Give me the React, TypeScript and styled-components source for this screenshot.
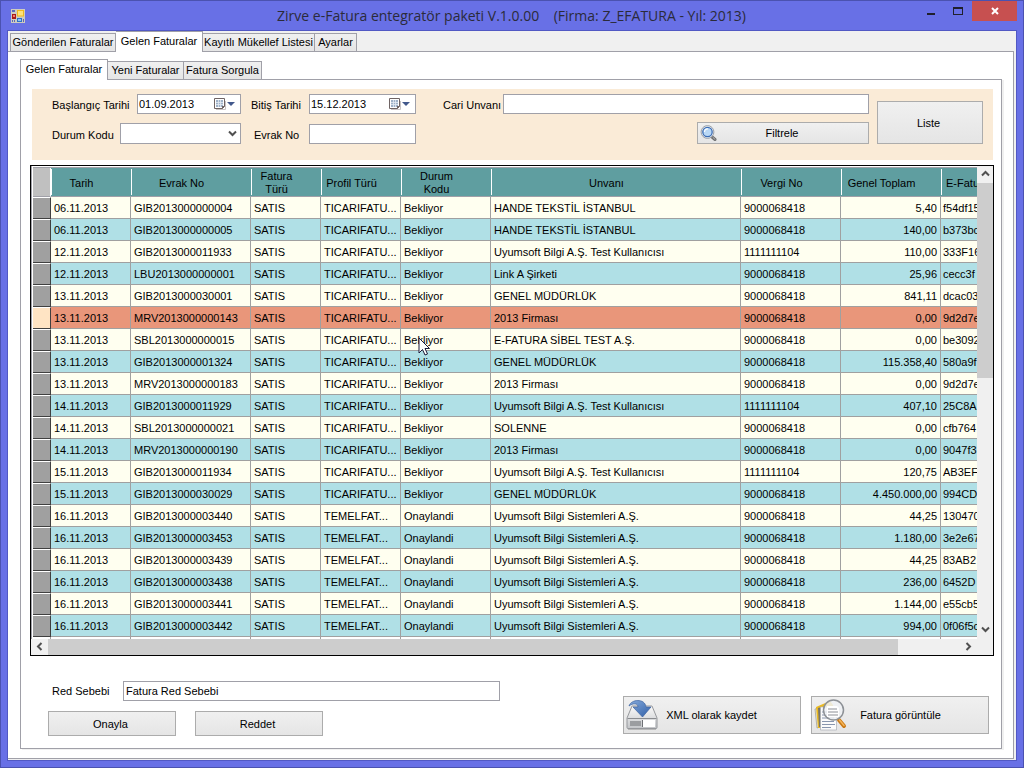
import React from 'react';
import styled, { createGlobalStyle, css } from 'styled-components';

const GlobalStyle = createGlobalStyle`
  *, *::before, *::after { box-sizing: border-box; }
  body { margin: 0; background: #6870e6; }
  body, button, input, select {
    font-family: "Liberation Sans", Arial, sans-serif;
    font-size: 11px;
    color: #000;
  }
`;

const line = '#a0a0a8';

/* ---------- window frame ---------- */

const Window = styled.div`
  min-height: 100vh;
  display: flex;
  flex-direction: column;
  padding: 0 6px 6px;
  border: 1px solid #4b52b0;
  background: #6870e6;
`;

const TitleBar = styled.header`
  position: relative;
  flex: none;
  height: 29px;
  display: flex;
  align-items: center;
  justify-content: space-between;
  padding-left: 4px;
`;

const Title = styled.h1`
  margin: 0;
  flex: 1;
  padding-left: 80px;
  text-align: center;
  font: 400 14px/28px "Open Sans", "Noto Sans", sans-serif;
  color: #2b2b3a;
  white-space: pre;
`;

const Caption = styled.div`
  align-self: flex-start;
  display: flex;
`;

const CaptionButton = styled.button<{ $close?: boolean }>`
  width: ${p => (p.$close ? 45 : 27)}px;
  height: 20px;
  padding: 0;
  border: 0;
  display: flex;
  align-items: center;
  justify-content: center;
  background: ${p => (p.$close ? '#c75050' : 'transparent')};
`;

const Client = styled.main`
  flex: 1;
  display: flex;
  flex-direction: column;
  border: 1px solid #5158c4;
  background: #f0f0f0;
`;

/* ---------- tabs ---------- */

const TabStrip = styled.div<{ $indent: number }>`
  flex: none;
  height: 20px;
  display: flex;
  align-items: flex-end;
  padding-left: ${p => p.$indent}px;
`;

const Tab = styled.button<{ $width: number; $active?: boolean }>`
  min-width: ${p => p.$width}px;
  height: 18px;
  padding: 0 1px;
  border: 1px solid ${line};
  border-bottom: 0;
  background: linear-gradient(#f0f0f0, #e5e5e5);
  white-space: nowrap;
  line-height: 17px;
  & + & { border-left: 0; }
  ${p => p.$active && css`
    position: relative;
    z-index: 1;
    height: 21px;
    margin-bottom: -1px;
    padding: 0 1px 2px;
    background: #fff;
  `}
`;

const OuterPanel = styled.section`
  flex: 1;
  display: flex;
  flex-direction: column;
  margin: 0 2px 1px 0;
  padding: 7px 11px 9px 12px;
  border: 1px solid ${line};
  border-left: 0;
  background: #fff;
`;

const InnerPanel = styled.section`
  flex: 1;
  display: flex;
  flex-direction: column;
  border: 1px solid ${line};
  box-shadow: 2px 1px 0 #f0f0f0;
  background: #fff;
`;

/* ---------- fields ---------- */

const FilterBar = styled.form`
  display: flex;
  gap: 8px;
  height: 71px;
  margin: 9px 8px 0 11px;
  padding: 4px 10px 0 20px;
  background: #faebd7;
`;

const FilterRows = styled.div`
  flex: 1;
  min-width: 0;
  display: flex;
  flex-direction: column;
  gap: 8px;
`;

const FieldRow = styled.div`
  display: flex;
  align-items: flex-end;
  min-height: 21px;
`;

const Label = styled.label<{ $width: number; $before?: number }>`
  flex: none;
  width: ${p => p.$width}px;
  margin-left: ${p => p.$before ?? 0}px;
  line-height: 18px;
  white-space: nowrap;
`;

const fieldBox = css<{ $width?: number }>`
  height: 20px;
  border: 1px solid ${line};
  border-radius: 0;
  background: #fff;
  ${p => (p.$width ? css`flex: none; width: ${p.$width}px;` : css`flex: 1; min-width: 0;`)}
`;

const TextBox = styled.input<{ $width?: number }>`
  ${fieldBox}
  padding: 0 2px;
  outline: 0;
`;

const DateBox = styled.div<{ $width?: number }>`
  ${fieldBox}
  display: flex;
  align-items: center;
  padding-right: 4px;
`;

const DateInput = styled.input`
  flex: 1;
  min-width: 0;
  padding: 0 1px;
  border: 0;
  outline: 0;
  background: transparent;
`;

const DropButton = styled.button`
  display: flex;
  padding: 0;
  border: 0;
  background: none;
`;

const SelectBox = styled.div<{ $width?: number }>`
  ${fieldBox}
  height: 21px;
  display: flex;
  align-items: center;
  padding-right: 3px;
`;

const Select = styled.select`
  appearance: none;
  flex: 1;
  min-width: 0;
  height: 19px;
  border: 0;
  outline: 0;
  background: transparent;
`;

const Button = styled.button<{ $width: number; $height: number; $top?: number }>`
  flex: none;
  display: flex;
  align-items: center;
  width: ${p => p.$width}px;
  height: ${p => p.$height}px;
  margin-top: ${p => p.$top ?? 0}px;
  padding: 0 3px 0 2px;
  border: 1px solid #acacac;
  background: linear-gradient(#f0f0f0, #e5e5e5);
`;

const ButtonText = styled.span<{ $shift?: number }>`
  flex: 1;
  text-align: center;
  padding-right: ${p => p.$shift ?? 0}px;
`;

const Spacer = styled.div`
  flex: 1;
`;

/* ---------- grid ---------- */

const GridFrame = styled.div`
  display: grid;
  grid-template-columns: minmax(0, 1fr) 16px;
  grid-template-rows: auto 16px;
  margin: 5px 7px 0 9px;
  border: 1px solid #000;
  background: #fff;
`;

const GridView = styled.div`
  overflow: hidden;
  padding: 1px 0 0 1px;
  border-left: 1px solid ${line};
`;

const Table = styled.table`
  width: 100%;
  table-layout: fixed;
  border-collapse: separate;
  border-spacing: 0;
  border-top: 1px solid ${line};
`;

const HeadCell = styled.th`
  height: 29px;
  padding: 2px 19px 0 0;
  border-bottom: 1px solid ${line};
  background: linear-gradient(#fff, #fff) 0 1px / 1px 26px no-repeat #5f9ea0;
  font-weight: 400;
  line-height: 13px;
  white-space: nowrap;
  overflow: hidden;
`;

const LastHeadCell = styled(HeadCell)`
  padding: 2px 0 0 5px;
  text-align: left;
`;

const Corner = styled.td`
  border-right: 1px solid #fff;
  border-bottom: 1px solid ${line};
  background: #c0c0c0;
`;

const Row = styled.tr<{ $tone: 'light' | 'blue' | 'selected' }>`
  background: ${p => ({ light: '#fffff0', blue: '#b0e0e6', selected: '#e9967a' })[p.$tone]};
`;

const RowHead = styled.td<{ $selected?: boolean }>`
  height: 22px;
  padding: 0;
  border-top: 1px solid #fff;
  border-right: 1px solid #404040;
  border-bottom: 1px solid #404040;
  background: ${p => (p.$selected ? '#ffe4c4' : '#a0a0a0')};
`;

const Cell = styled.td<{ $right?: boolean; $over?: boolean }>`
  height: 22px;
  padding: 0 3px;
  border-right: 1px solid #a0a0a0;
  border-bottom: 1px solid #a0a0a0;
  text-align: ${p => (p.$right ? 'right' : 'left')};
  white-space: nowrap;
  overflow: ${p => (p.$over ? 'visible' : 'hidden')};
`;

const LastCell = styled(Cell)`
  padding: 0 0 0 2px;
  border-right: 0;
`;

const EndCell = styled.td`
  height: 2px;
  padding: 0;
  border-right: 1px solid #a0a0a0;
  &:last-child { border-right: 0; }
`;

const PointerHost = styled.span`
  position: relative;
`;

const PointerArrow = styled.svg`
  position: absolute;
  left: 14px;
  top: 3px;
  z-index: 2;
`;

const ScrollBar = styled.div<{ $vertical?: boolean }>`
  display: flex;
  flex-direction: ${p => (p.$vertical ? 'column' : 'row')};
  grid-column: ${p => (p.$vertical ? 'auto' : '1 / -1')};
  padding-right: ${p => (p.$vertical ? 0 : 16)}px;
  background: #f0f0f0;
`;

const ScrollButton = styled.button`
  flex: none;
  width: 17px;
  height: 17px;
  padding: 0 1px 2px 0;
  border: 0;
  display: flex;
  align-items: center;
  justify-content: center;
  background: none;
`;

const Thumb = styled.div<{ $share: number }>`
  flex: ${p => p.$share} 1 0;
  background: #cdcdcd;
`;

const Track = styled.div<{ $share: number }>`
  flex: ${p => p.$share} 1 0;
`;

/* ---------- footer ---------- */

const Footer = styled.footer`
  display: flex;
  justify-content: space-between;
  align-items: center;
  padding: 25px 12px 12px 27px;
`;

const Reject = styled.div`
  display: flex;
  flex-direction: column;
  gap: 10px;
`;

const RejectRow = styled.div`
  display: flex;
  align-items: center;
  padding-left: 4px;
`;

const ButtonRow = styled.div<{ $gap: number }>`
  display: flex;
  gap: ${p => p.$gap}px;
`;

/* ---------- drawings ---------- */

const AppIcon = () => (
  <svg width="14" height="14" viewBox="0 0 14 14" aria-hidden="true">
    <path d="M0 0h14v14H0z" fill="#cfccbe" />
    <path d="M1 1h3v2H1zM1 11h1v2H1zM3 11h1v2H3zM12 10h1v3h-1z" fill="#5b68b8" />
    <path d="M6 1h7v6.500H6z" fill="#f0b91c" />
    <path d="M7 2h5v4.500H7z" fill="#ffe27a" />
    <path d="M1 5h4v5H1z" fill="#a81818" />
    <path d="M2 6h2v2H2z" fill="#f08070" />
    <path d="M6 9h5v4H6z" fill="#2e6fc8" />
    <path d="M7 10h3v2H7z" fill="#8ec3f5" />
  </svg>
);

const CalendarIcon = () => (
  <svg width="22" height="14" viewBox="0 0 22 14" aria-hidden="true">
    <path d="M2 12.500h9.500V4" fill="none" stroke="#c9c4c4" />
    <path d="M0.500 1.500h10v8l-2 2h-8z" fill="#fff" stroke="#6f6464" />
    <path d="M2 3h7v7H2z" fill="#9fb2c8" />
    <path d="M4.500 3v7M6.500 3v7M2 5.500h7M2 7.500h7" stroke="#e4ebf3" strokeWidth="0.800" />
    <path d="M8 12V9h3z" fill="#6f6464" />
    <path d="M13 5h8l-4 4z" fill="#42598c" />
  </svg>
);

const paths = {
  up: 'M1 6.500L4.500 3 8 6.500',
  down: 'M1 2.500L4.500 6 8 2.500',
  left: 'M6.500 1L3 4.500 6.500 8',
  right: 'M2.500 1L6 4.500 2.500 8',
};

const Chevron = ({ dir }: { dir: keyof typeof paths }) => (
  <svg width="9" height="9" viewBox="0 0 9 9" aria-hidden="true">
    <path d={paths[dir]} fill="none" stroke="#505050" strokeWidth="2" />
  </svg>
);

const SearchIcon = () => (
  <svg width="17" height="17" viewBox="0 0 17 17" aria-hidden="true">
    <path d="M11.500 11.500l3.500 3" stroke="#6e6e6e" strokeWidth="3" strokeLinecap="round" />
    <path d="M13 12.500l2 1.800" stroke="#b8b8b8" strokeLinecap="round" />
    <circle cx="7.500" cy="7" r="6.400" fill="#e9edf2" stroke="#9aa0a8" />
    <circle cx="7.500" cy="7" r="4.700" fill="#b9d8f6" stroke="#3b6cb4" strokeWidth="1.300" />
    <path d="M4.500 7c0-2 1.500-3.300 3.500-3" fill="none" stroke="#fff" strokeWidth="1.200" />
  </svg>
);

const SaveIcon = () => (
  <svg width="32" height="32" viewBox="0 0 32 32" aria-hidden="true">
    <defs>
      <linearGradient id="drive" x1="0" y1="0" x2="0" y2="1">
        <stop offset="0" stopColor="#fafafa" />
        <stop offset="1" stopColor="#c4c6c9" />
      </linearGradient>
      <linearGradient id="arrow" x1="0" y1="0" x2="1" y2="1">
        <stop offset="0" stopColor="#86aadb" />
        <stop offset="1" stopColor="#2f5fa8" />
      </linearGradient>
    </defs>
    <path d="M2 29.500h28v1.500H2z" fill="#b9b9b9" />
    <path d="M6 7h20l5 12v9.500q0 1-1 1H2q-1 0-1-1V19z" fill="url(#drive)" stroke="#96989c" />
    <path d="M1.500 19.500h29" stroke="#8a8c90" />
    <path d="M4 22h11v5H4z" fill="#9b9da0" />
    <path d="M17 21h12v7H17z" fill="#fff" />
    <path d="M16.500 21v7" stroke="#6f7175" />
    <path d="M3 7C5 0 19-1 20 8h5l-8.500 10L7 8h5c0-4-5-4-9-1z" fill="url(#arrow)" stroke="#3c63a0" strokeWidth="0.700" />
  </svg>
);

const ViewIcon = () => (
  <svg width="34" height="34" viewBox="0 0 34 34" aria-hidden="true">
    <path d="M1 11l4-1 1 19-3 1z" fill="#e8e6da" stroke="#8b8b85" strokeWidth="0.600" />
    <path d="M2 9l14-6 3 4v23H4z" fill="#e9b923" />
    <path d="M4 10l4-1v20H5z" fill="#77746a" />
    <path d="M6.500 9h12l4 4v19h-16z" fill="#fbfbfb" stroke="#a9adb4" strokeWidth="0.700" />
    <path d="M8 14h10M8 17h12M8 20h12M8 23.500h12M8 26.500h13M8 29.500h9" stroke="#8996ae" />
    <path d="M25 22l5 6" stroke="#c97916" strokeWidth="4" strokeLinecap="round" />
    <path d="M25.500 22l4.500 5.500" stroke="#f6b65a" strokeWidth="1.500" strokeLinecap="round" />
    <circle cx="19.500" cy="12" r="10" fill="#eef1f4" fillOpacity="0.85" stroke="#8d9196" strokeWidth="1.500" />
    <path d="M13 8h10l2 2v9H13z" fill="#fff" />
    <path d="M14 11h9M14 14h10M14 17h10" stroke="#8c8f96" />
  </svg>
);

const Pointer = () => (
  <PointerArrow width="13" height="20" viewBox="0 0 13 20" aria-hidden="true">
    <path d="M1 1v15l3.500-3.500L7 18l2.500-1L7 11.500h4.500z" fill="#fff" stroke="#1b1b3a" />
  </PointerArrow>
);

/* ---------- data ---------- */

const uyumTest = 'Uyumsoft Bilgi A.Ş. Test Kullanıcısı';
const uyum = 'Uyumsoft Bilgi Sistemleri A.Ş.';

const invoices: string[][] = [
  ['06.11.2013', 'GIB2013000000004', 'HANDE TEKSTİL İSTANBUL', '9000068418', '5,40', 'f54df15'],
  ['06.11.2013', 'GIB2013000000005', 'HANDE TEKSTİL İSTANBUL', '9000068418', '140,00', 'b373bc'],
  ['12.11.2013', 'GIB2013000011933', uyumTest, '1111111104', '110,00', '333F16'],
  ['12.11.2013', 'LBU2013000000001', 'Link A Şirketi', '9000068418', '25,96', 'cecc3f'],
  ['13.11.2013', 'GIB2013000030001', 'GENEL MÜDÜRLÜK', '9000068418', '841,11', 'dcac03'],
  ['13.11.2013', 'MRV2013000000143', '2013 Firması', '9000068418', '0,00', '9d2d7e'],
  ['13.11.2013', 'SBL2013000000015', 'E-FATURA SİBEL TEST A.Ş.', '9000068418', '0,00', 'be3092'],
  ['13.11.2013', 'GIB2013000001324', 'GENEL MÜDÜRLÜK', '9000068418', '115.358,40', '580a9f'],
  ['13.11.2013', 'MRV2013000000183', '2013 Firması', '9000068418', '0,00', '9d2d7e'],
  ['14.11.2013', 'GIB2013000011929', uyumTest, '1111111104', '407,10', '25C8A'],
  ['14.11.2013', 'SBL2013000000021', 'SOLENNE', '9000068418', '0,00', 'cfb764'],
  ['14.11.2013', 'MRV2013000000190', '2013 Firması', '9000068418', '0,00', '9047f3'],
  ['15.11.2013', 'GIB2013000011934', uyumTest, '1111111104', '120,75', 'AB3EF'],
  ['15.11.2013', 'GIB2013000030029', 'GENEL MÜDÜRLÜK', '9000068418', '4.450.000,00', '994CD'],
  ['16.11.2013', 'GIB2013000003440', uyum, '9000068418', '44,25', '130470'],
  ['16.11.2013', 'GIB2013000003453', uyum, '9000068418', '1.180,00', '3e2e67'],
  ['16.11.2013', 'GIB2013000003439', uyum, '9000068418', '44,25', '83AB2'],
  ['16.11.2013', 'GIB2013000003438', uyum, '9000068418', '236,00', '6452D'],
  ['16.11.2013', 'GIB2013000003441', uyum, '9000068418', '1.144,00', 'e55cb5'],
  ['16.11.2013', 'GIB2013000003442', uyum, '9000068418', '994,00', '0f06f5c'],
];

const SELECTED = 5;
const FIRST_APPROVED = 14;
const HOVERED = 6;

const columnWidths = [18, 80, 120, 70, 80, 90, undefined, 100, 100, 36];

const InvoiceTable = () => (
  <Table>
    <colgroup>
      {columnWidths.map((w, i) => <col key={i} width={w} />)}
    </colgroup>
    <thead>
      <tr>
        <Corner />
        <HeadCell>Tarih</HeadCell>
        <HeadCell>Evrak No</HeadCell>
        <HeadCell>Fatura<br />Türü</HeadCell>
        <HeadCell>Profil Türü</HeadCell>
        <HeadCell>Durum<br />Kodu</HeadCell>
        <HeadCell>Unvanı</HeadCell>
        <HeadCell>Vergi No</HeadCell>
        <HeadCell>Genel Toplam</HeadCell>
        <LastHeadCell>E-Fatu</LastHeadCell>
      </tr>
    </thead>
    <tbody>
      {invoices.map(([date, no, name, tax, total, uuid], i) => {
        const approved = i >= FIRST_APPROVED;
        const hovered = i === HOVERED;
        return (
          <Row key={no} $tone={i === SELECTED ? 'selected' : i % 2 ? 'blue' : 'light'}>
            <RowHead $selected={i === SELECTED} />
            <Cell>{date}</Cell>
            <Cell>{no}</Cell>
            <Cell>SATIS</Cell>
            <Cell>{approved ? 'TEMELFAT...' : 'TICARIFATU...'}</Cell>
            <Cell $over={hovered}>
              {hovered
                ? <PointerHost>Bekliyor<Pointer /></PointerHost>
                : approved ? 'Onaylandi' : 'Bekliyor'}
            </Cell>
            <Cell>{name}</Cell>
            <Cell>{tax}</Cell>
            <Cell $right>{total}</Cell>
            <LastCell>{uuid}</LastCell>
          </Row>
        );
      })}
      <tr>
        {columnWidths.map((_, i) => <EndCell key={i} />)}
      </tr>
    </tbody>
  </Table>
);

const DateField = ({ id, value, width }: { id: string; value: string; width: number }) => (
  <DateBox $width={width}>
    <DateInput id={id} defaultValue={value} />
    <DropButton type="button" aria-label="Takvim"><CalendarIcon /></DropButton>
  </DateBox>
);

export default function App() {
  return (
    <>
      <GlobalStyle />
      <Window>
        <TitleBar>
          <AppIcon />
          <Title>{'Zirve e-Fatura entegratör paketi V.1.0.00    (Firma: Z_EFATURA - Yıl: 2013)'}</Title>
          <Caption>
            <CaptionButton aria-label="Simge durumuna küçült">
              <svg width="9" height="9"><path d="M0 6h8v2H0z" fill="#20202c" /></svg>
            </CaptionButton>
            <CaptionButton aria-label="Ekranı kapla">
              <svg width="11" height="9"><path d="M0 0h10v8H0zM1 2v5h8V2z" fill="#20202c" fillRule="evenodd" /></svg>
            </CaptionButton>
            <CaptionButton $close aria-label="Kapat">
              <svg width="8" height="8"><path d="M1 1l6 6M7 1L1 7" stroke="#fff" strokeWidth="2" /></svg>
            </CaptionButton>
          </Caption>
        </TitleBar>

        <Client>
          <TabStrip $indent={2} role="tablist">
            <Tab role="tab" $width={106}>Gönderilen Faturalar</Tab>
            <Tab role="tab" $width={87} $active aria-selected>Gelen Faturalar</Tab>
            <Tab role="tab" $width={112}>Kayıtlı Mükellef Listesi</Tab>
            <Tab role="tab" $width={42}>Ayarlar</Tab>
          </TabStrip>
          <OuterPanel>
            <TabStrip $indent={0} role="tablist">
              <Tab role="tab" $width={88} $active aria-selected>Gelen Faturalar</Tab>
              <Tab role="tab" $width={76}>Yeni Faturalar</Tab>
              <Tab role="tab" $width={78}>Fatura Sorgula</Tab>
            </TabStrip>
            <InnerPanel>
              <FilterBar onSubmit={e => e.preventDefault()}>
                <FilterRows>
                  <FieldRow>
                    <Label htmlFor="start" $width={85}>Başlangıç Tarihi</Label>
                    <DateField id="start" value="01.09.2013" width={104} />
                    <Label htmlFor="end" $width={58} $before={10}>Bitiş Tarihi</Label>
                    <DateField id="end" value="15.12.2013" width={107} />
                    <Label htmlFor="customer" $width={60} $before={27}>Cari Unvanı</Label>
                    <TextBox id="customer" />
                  </FieldRow>
                  <FieldRow>
                    <Label htmlFor="status" $width={68}>Durum Kodu</Label>
                    <SelectBox $width={121}>
                      <Select id="status" defaultValue=""><option value="" /></Select>
                      <Chevron dir="down" />
                    </SelectBox>
                    <Label htmlFor="docno" $width={55} $before={13}>Evrak No</Label>
                    <TextBox id="docno" $width={107} />
                    <Spacer />
                    <Button type="submit" $width={172} $height={22}>
                      <SearchIcon />
                      <ButtonText $shift={18}>Filtrele</ButtonText>
                    </Button>
                  </FieldRow>
                </FilterRows>
                <Button type="button" $width={106} $height={43} $top={8}>
                  <ButtonText $shift={2}>Liste</ButtonText>
                </Button>
              </FilterBar>

              <GridFrame>
                <GridView><InvoiceTable /></GridView>
                <ScrollBar $vertical>
                  <ScrollButton aria-label="Yukarı"><Chevron dir="up" /></ScrollButton>
                  <Thumb $share={195} />
                  <Track $share={243} />
                  <ScrollButton aria-label="Aşağı"><Chevron dir="down" /></ScrollButton>
                </ScrollBar>
                <ScrollBar>
                  <ScrollButton aria-label="Sola"><Chevron dir="left" /></ScrollButton>
                  <Thumb $share={850} />
                  <Track $share={62} />
                  <ScrollButton aria-label="Sağa"><Chevron dir="right" /></ScrollButton>
                </ScrollBar>
              </GridFrame>

              <Footer>
                <Reject>
                  <RejectRow>
                    <Label htmlFor="reason" $width={71}>Red Sebebi</Label>
                    <TextBox id="reason" $width={377} defaultValue="Fatura Red Sebebi" />
                  </RejectRow>
                  <ButtonRow $gap={19}>
                    <Button $width={128} $height={25}><ButtonText $shift={2}>Onayla</ButtonText></Button>
                    <Button $width={128} $height={25}><ButtonText $shift={2}>Reddet</ButtonText></Button>
                  </ButtonRow>
                </Reject>
                <ButtonRow $gap={10}>
                  <Button $width={178} $height={38} $top={13}>
                    <SaveIcon />
                    <ButtonText $shift={32}>XML olarak kaydet</ButtonText>
                  </Button>
                  <Button $width={178} $height={38} $top={13}>
                    <ViewIcon />
                    <ButtonText $shift={32}>Fatura görüntüle</ButtonText>
                  </Button>
                </ButtonRow>
              </Footer>
            </InnerPanel>
          </OuterPanel>
        </Client>
      </Window>
    </>
  );
}
